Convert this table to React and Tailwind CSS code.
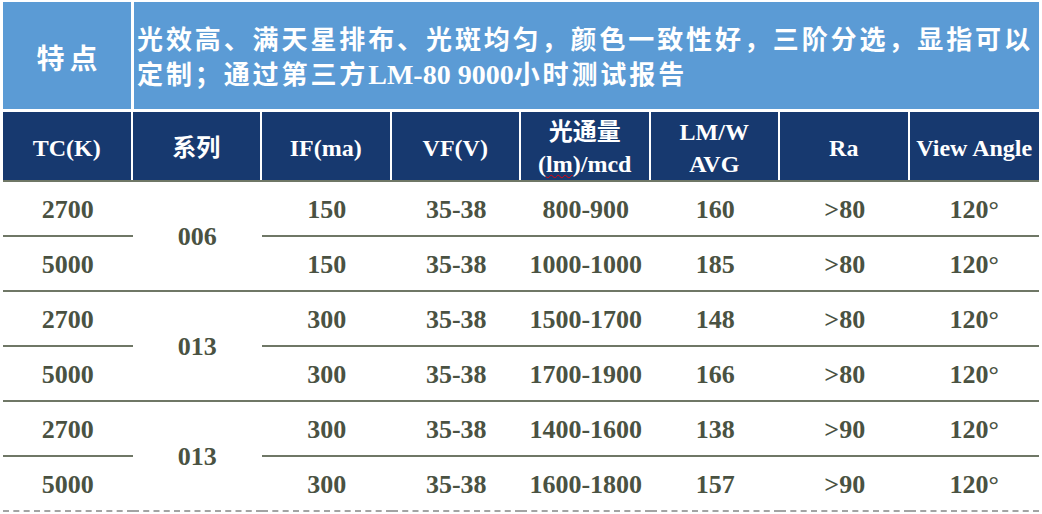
import React from "react";

const serif = { fontFamily: '"Liberation Serif", "Noto Sans CJK SC", serif' };

const groups = [
  {
    series: "006",
    rows: [
      ["2700", "150", "35-38", "800-900", "160", ">80", "120°"],
      ["5000", "150", "35-38", "1000-1000", "185", ">80", "120°"],
    ],
  },
  {
    series: "013",
    rows: [
      ["2700", "300", "35-38", "1500-1700", "148", ">80", "120°"],
      ["5000", "300", "35-38", "1700-1900", "166", ">80", "120°"],
    ],
  },
  {
    series: "013",
    rows: [
      ["2700", "300", "35-38", "1400-1600", "138", ">90", "120°"],
      ["5000", "300", "35-38", "1600-1800", "157", ">90", "120°"],
    ],
  },
];

const HeadCell = ({ children, last }) => (
  <div
    className={
      "flex flex-col items-center justify-center pt-[3px] text-white font-bold text-[24px] leading-[32px] whitespace-nowrap bg-[#17396f] " +
      (last ? "" : "border-r-2 border-white")
    }
  >
    {children}
  </div>
);

const App = () => {
  const cells = [];
  groups.forEach((g, gi) => {
    const lastGroup = gi === groups.length - 1;
    g.rows.forEach((r, ri) => {
      const bottom = ri === 1
        ? lastGroup
          ? "border-b-2 border-dashed border-[#a3a3a3]"
          : "border-b-2 border-[#6f7766]"
        : "border-b-2 border-[#6f7766]";
      const row = ri + 1 + gi * 2;
      r.forEach((v, ci) => {
        const col = ci === 0 ? 1 : ci + 2;
        cells.push(
          <div
            key={`${gi}-${ri}-${ci}`}
            className={"flex items-center justify-center pt-[1px] " + bottom}
            style={{ gridColumn: col, gridRow: row }}
          >
            {v}
          </div>
        );
      });
    });
    cells.push(
      <div
        key={`s-${gi}`}
        className={
          "flex items-center justify-center pt-[1px] " +
          (lastGroup
            ? "border-b-2 border-dashed border-[#a3a3a3]"
            : "border-b-2 border-[#6f7766]")
        }
        style={{ gridColumn: 2, gridRow: `${gi * 2 + 1} / span 2` }}
      >
        {g.series}
      </div>
    );
  });

  return (
    <div className="w-[1042px] h-[514px] bg-white overflow-hidden" style={serif}>
      <div className="ml-[3px] mt-[2px] w-[1036px]">
        {/* 特点 */}
        <div className="flex h-[107px] gap-[3px]">
          <div className="w-[128px] bg-[#5b9bd5] flex items-center justify-center text-white font-bold text-[28px] tracking-[5px] pl-[5px] pt-[8px]">
            特点
          </div>
          <div className="flex-1 bg-[#5b9bd5] flex flex-col justify-center pl-[3px] text-white font-bold text-[26px] leading-[34px] tracking-[2.9px] pt-[6px]">
            <div className="whitespace-nowrap">光效高、满天星排布、光斑均匀，颜色一致性好，三阶分选，显指可以</div>
            <div className="whitespace-nowrap">
              定制；通过第三方<span className="tracking-normal text-[28px]">LM-80 9000</span>小时测试报告
            </div>
          </div>
        </div>

        {/* header */}
        <div className="mt-[3px] grid grid-cols-8 h-[70px] border-b-2 border-[#6f7766]">
          <HeadCell>TC(K)</HeadCell>
          <HeadCell>系列</HeadCell>
          <HeadCell>IF(ma)</HeadCell>
          <HeadCell>VF(V)</HeadCell>
          <HeadCell>
            <span>光通量</span>
            <span>
              (<span className="underline decoration-wavy decoration-red-600 decoration-1 underline-offset-2">lm</span>)/mcd
            </span>
          </HeadCell>
          <HeadCell>
            <span>LM/W</span>
            <span>AVG</span>
          </HeadCell>
          <HeadCell>Ra</HeadCell>
          <HeadCell last>View Angle</HeadCell>
        </div>

        {/* data */}
        <div className="grid grid-cols-8 grid-rows-[repeat(6,55px)] text-[26px] font-bold text-[#4a5242]">
          {cells}
        </div>
      </div>
    </div>
  );
};

export default App;
